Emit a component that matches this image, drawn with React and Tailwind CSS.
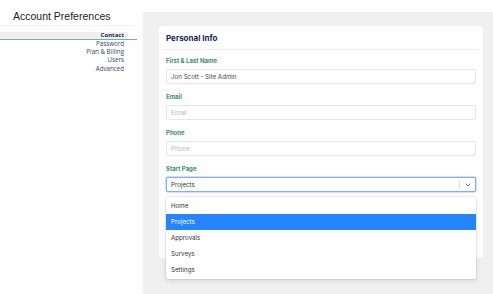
import { ChevronDown } from 'lucide-react';

const navItems = ['Password', 'Plan & Billing', 'Users', 'Advanced'];
const startPages = ['Home', 'Projects', 'Approvals', 'Surveys', 'Settings'];

function Field({ label, value, placeholder }) {
  return (
    <div>
      <label className="block h-[8px] text-[6px] leading-[8px] font-bold text-[#3f8d6f]">
        {label}
      </label>
      <div className="mt-[4px] h-[15px] rounded-[2px] border border-[#e6e6e6] bg-white px-[4px] flex items-center">
        {value ? (
          <span className="text-[6.2px] text-[#4a4a4a]">{value}</span>
        ) : (
          <span className="text-[6.2px] text-[#b8b8b8]">{placeholder}</span>
        )}
      </div>
    </div>
  );
}

export default function App() {
  const selected = 'Projects';

  return (
    <div className="flex w-[493px] h-[294px] overflow-hidden bg-white font-['Inter',sans-serif]">
      {/* Sidebar */}
      <aside className="w-[143px] shrink-0 pt-[10px]">
        <h1 className="pl-[13px] text-[10.5px] leading-[12px] text-[#222] font-['Liberation_Sans',Arial,sans-serif]">
          Account Preferences
        </h1>
        <div className="mt-[3px] h-px w-[135px] bg-[#f1f1f1]" />
        <nav className="mt-[6px] font-['Open_Sans',sans-serif]">
          <div className="w-[137px] border-b-[1.5px] border-[#78b1a0]">
            <div className="w-[128px] bg-[#eef0f0] pr-[4px] text-right text-[6px] leading-[7px] font-bold text-[#1d2b4c]">
              Contact
            </div>
          </div>
          <ul className="w-[128px] pr-[4px] text-right">
            {navItems.map((item) => (
              <li key={item} className="text-[6.2px] leading-[8.2px] text-[#34466a]">
                {item}
              </li>
            ))}
          </ul>
        </nav>
      </aside>

      {/* Main */}
      <main className="flex-1 mt-[12px] bg-[#f0f0f0] pl-[16px] pr-[10px] pt-[14px]">
        <div className="rounded-[3px] bg-white shadow-[0_0_1px_rgba(0,0,0,0.06)]">
          <div className="mx-[4px] border-b border-[#eeeeee] px-[3px] pt-[8px] pb-[7px]">
            <h2 className="text-[8px] leading-[8px] font-bold text-[#1c2552]">Personal Info</h2>
          </div>

          <div className="px-[7px] pt-[7px] pb-[66px] flex flex-col gap-[9px]">
            <Field label="First & Last Name" value="Jon Scott - Site Admin" />
            <Field label="Email" placeholder="Email" />
            <Field label="Phone" placeholder="Phone" />

            <div>
              <label className="block h-[8px] text-[6px] leading-[8px] font-bold text-[#3f8d6f]">
                Start Page
              </label>
              <div className="relative mt-[4px]">
                <div className="h-[15px] rounded-[2px] border border-[#7fb0fb] shadow-[0_0_0_0.5px_#9cc2fc] bg-white flex items-center">
                  <span className="flex-1 pl-[4px] text-[6.2px] text-[#333]">{selected}</span>
                  <span className="h-[8px] w-px bg-[#dcdcdc]" />
                  <span className="w-[15px] flex items-center justify-center text-[#555]">
                    <ChevronDown size={8} strokeWidth={2.4} />
                  </span>
                </div>

                {/* Menu */}
                <ul className="absolute left-0 right-0 top-full mt-[5px] z-10 rounded-[2px] bg-white shadow-[0_0_0_0.5px_rgba(0,0,0,0.1),0_2px_5px_rgba(0,0,0,0.12)] pt-px pb-px">
                  {startPages.map((page) => (
                    <li
                      key={page}
                      className={
                        page === selected
                          ? 'h-[16px] flex items-center pl-[5px] text-[6.2px] bg-[#2684ff] text-white'
                          : 'h-[16px] flex items-center pl-[5px] text-[6.2px] text-[#333]'
                      }
                    >
                      {page}
                    </li>
                  ))}
                </ul>
              </div>
            </div>
          </div>
        </div>
      </main>
    </div>
  );
}
